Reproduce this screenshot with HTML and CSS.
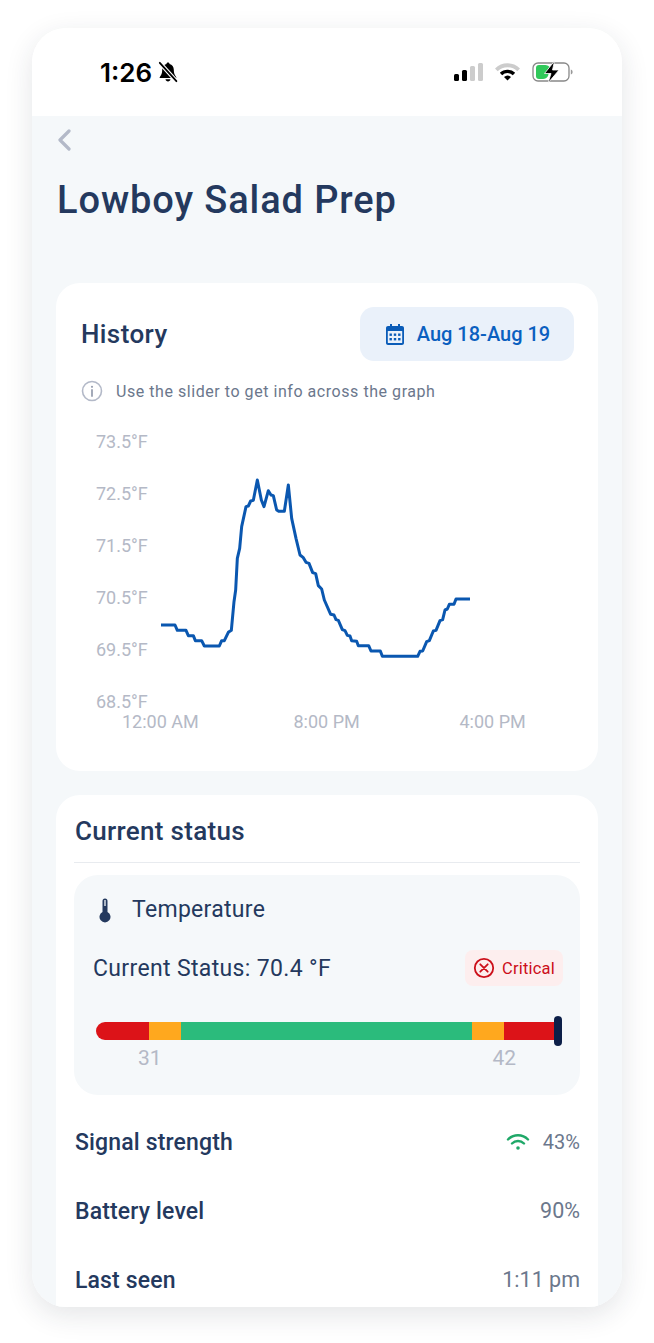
FILE: index.html
```html
<!DOCTYPE html>
<html lang="en">
<head>
  <meta charset="UTF-8">
  <meta name="viewport" content="width=device-width, initial-scale=1.0">
  <title>Lowboy Salad Prep</title>
  <link rel="stylesheet" href="styles.css">
</head>
<body>
  <div class="phone">
    <div class="status-bar">
      <div class="status-left">
        <span class="clock">1:26</span>
        <svg class="bell" width="22" height="22" viewBox="0 0 22 22">
          <path d="M11 1.500c-.9 0-1.500.6-1.500 1.400C6.800 3.600 5.200 5.900 5.200 8.800c0 3.600-.9 5.600-2.400 7.100-.4.500-.1 1.100.5 1.100h15.400c.6 0 .9-.6.5-1.100-1.500-1.500-2.400-3.500-2.400-7.100 0-2.900-1.600-5.200-4.300-5.900C12.500 2.100 11.900 1.500 11 1.500z" fill="#000"/>
          <path d="M8.500 18.300h5c-.2 1.300-1.200 2.200-2.500 2.200s-2.300-.9-2.500-2.200z" fill="#000"/>
          <path d="M2.800 1.800l16.600 18.400" stroke="#fff" stroke-width="4"/>
          <path d="M2.800 1.800l16.600 18.400" stroke="#000" stroke-width="1.800" stroke-linecap="round"/>
        </svg>
      </div>
      <div class="status-right">
        <svg width="30" height="20" viewBox="0 0 30 20">
          <rect x="0" y="12" width="5" height="7" rx="1.500" fill="#000"/>
          <rect x="8" y="8" width="5" height="11" rx="1.500" fill="#000"/>
          <rect x="16" y="4" width="5" height="15" rx="1.500" fill="#ccc"/>
          <rect x="24" y="1" width="5" height="18" rx="1.500" fill="#ccc"/>
        </svg>
        <svg width="25" height="20" viewBox="0 0 25 20">
          <path d="M0 6.500a17.500 17.500 0 0 1 25 0l-2.700 2.800a13.800 13.800 0 0 0-19.600 0z" fill="#ccc"/>
          <path d="M4.800 10.800a11 11 0 0 1 15.400 0l-2.400 2.500a7.500 7.500 0 0 0-10.600 0z" fill="#000"/>
          <path d="M9 15a5.200 5.200 0 0 1 7 0l-3.500 3.600z" fill="#000"/>
        </svg>
        <svg width="42" height="24" viewBox="0 0 42 24">
          <rect x="1" y="3" width="36" height="18" rx="5" fill="none" stroke="#888" stroke-width="1.300"/>
          <path d="M38.800 9.500c1.400.4 1.800 1.400 1.800 2.500s-.4 2.100-1.800 2.500z" fill="#999"/>
          <path d="M7 5h5c4 0 5 1 6 3l-2 8c-1 2-3 3-5 3H7c-2 0-3-1-3-3V8c0-2 1-3 3-3z" fill="#30c85a"/>
          <path d="M22.500 1L12.500 13.500h6.500L16 23l11-13h-6.500z" fill="#000" stroke="#fff" stroke-width=".8"/>
        </svg>
      </div>
    </div>

    <div class="screen">
      <svg class="back" width="16" height="22" viewBox="0 0 16 22">
        <path d="M13 2L4 11l9 9" fill="none" stroke="#b3b9c8" stroke-width="3.200" stroke-linecap="round" stroke-linejoin="round"/>
      </svg>
      <h1 class="title">Lowboy Salad Prep</h1>

      <section class="card history">
        <div class="history-head">
          <h2 class="history-title">History</h2>
          <div class="date-btn">
            <svg width="20" height="21" viewBox="0 0 20 21">
              <path d="M3 2h2V0h2v2h6V0h2v2h2c1.100 0 2 .9 2 2v15c0 1.100-.9 2-2 2H3c-1.100 0-2-.9-2-2V4c0-1.100.9-2 2-2z" fill="#0a5cb8"/>
              <rect x="2.800" y="7" width="14.400" height="12" fill="#eaf1fa" rx=".5"/>
              <g fill="#0a5cb8">
                <rect x="4.500" y="9.500" width="2.400" height="2.400"/><rect x="8.800" y="9.500" width="2.400" height="2.400"/><rect x="13.100" y="9.500" width="2.400" height="2.400"/>
                <rect x="4.500" y="14" width="2.400" height="2.400"/><rect x="8.800" y="14" width="2.400" height="2.400"/><rect x="13.100" y="14" width="2.400" height="2.400"/>
              </g>
            </svg>
            <span>Aug 18-Aug 19</span>
          </div>
        </div>
        <div class="hint">
          <svg width="22" height="22" viewBox="0 0 22 22">
            <circle cx="11" cy="11" r="9.500" fill="none" stroke="#b3b9c8" stroke-width="1.600"/>
            <path d="M11 10v6" stroke="#9aa1b2" stroke-width="1.800" stroke-linecap="round"/>
            <circle cx="11" cy="6.800" r="1.100" fill="#9aa1b2"/>
          </svg>
          <span>Use the slider to get info across the graph</span>
        </div>
        <svg class="chart" width="470" height="310" viewBox="0 0 470 310">
          <g class="axis">
            <text x="6" y="23">73.5°F</text>
            <text x="6" y="75">72.5°F</text>
            <text x="6" y="127">71.5°F</text>
            <text x="6" y="179">70.5°F</text>
            <text x="6" y="231">69.5°F</text>
            <text x="6" y="283">68.5°F</text>
            <text x="32" y="302.500">12:00 AM</text>
            <text x="203.500" y="302.500">8:00 PM</text>
            <text x="369.500" y="302.500">4:00 PM</text>
          </g>
          <polyline transform="scale(.33333)" fill="none" stroke="#0a57b0" stroke-width="9" stroke-linejoin="round" points="213,600 255,600 262,616 288,616 295,632 310,632 316,647 335,647 343,663 388,663 395,647 403,647 415,622 424,616 432,530 437,495 442,400 449,370 455,305 468,245 475,243 482,228 490,226 502,165 514,225 522,245 535,197 543,210 550,212 560,255 567,259 583,259 595,180 605,280 618,340 630,390 640,398 648,412 657,415 668,443 677,446 685,482 695,492 703,525 722,568 732,570 738,584 745,586 757,614 765,617 772,631 780,633 785,647 800,649 805,662 836,662 843,678 871,678 877,694 983,694 990,679 998,678 1010,650 1018,647 1030,618 1038,616 1050,587 1058,584 1065,555 1072,552 1078,538 1092,538 1098,522 1140,522"/>
        </svg>
      </section>

      <section class="card status">
        <h2 class="status-title">Current status</h2>
        <div class="temp-panel">
          <div class="temp-head">
            <svg width="16" height="26" viewBox="0 0 16 26">
              <path d="M5.500 4a2.500 2.500 0 0 1 5 0v11a5.500 5.500 0 1 1-5 0z" fill="#24395e"/>
              <path d="M8 3v6" stroke="#f5f8fa" stroke-width="1.300"/>
            </svg>
            <span>Temperature</span>
          </div>
          <div class="temp-row">
            <span class="temp-now">Current Status: 70.4 °F</span>
            <div class="badge">
              <svg width="22" height="22" viewBox="0 0 22 22">
                <circle cx="11" cy="11" r="9.200" fill="none" stroke="#cc0f1a" stroke-width="1.800"/>
                <path d="M7.300 7.300l7.400 7.400M14.700 7.300l-7.400 7.400" stroke="#cc0f1a" stroke-width="1.800" stroke-linecap="round"/>
              </svg>
              <span>Critical</span>
            </div>
          </div>
          <div class="gauge">
            <div class="seg red first"></div>
            <div class="seg orange small"></div>
            <div class="seg green"></div>
            <div class="seg orange small"></div>
            <div class="seg red last"></div>
            <div class="knob"></div>
          </div>
          <div class="gauge-labels">
            <span>31</span>
            <span>42</span>
          </div>
        </div>
        <div class="row">
          <span class="row-name">Signal strength</span>
          <span class="row-value signal">
            <svg width="24" height="18" viewBox="0 0 24 18">
              <path d="M2 6.500a14 14 0 0 1 20 0M6 10.500a8.500 8.500 0 0 1 12 0" fill="none" stroke="#1fa868" stroke-width="2.400" stroke-linecap="round"/>
              <circle cx="12" cy="15" r="1.800" fill="#1fa868"/>
            </svg>
            43%
          </span>
        </div>
        <div class="row">
          <span class="row-name">Battery level</span>
          <span class="row-value">90%</span>
        </div>
        <div class="row">
          <span class="row-name">Last seen</span>
          <span class="row-value">1:11 pm</span>
        </div>
      </section>
    </div>
  </div>
</body>
</html>
```

FILE: styles.css
```css
html,
body {
  margin: 0;
  background: #fff;
}

body {
  height: 1343px;
  padding: 28px 32px 0;
  box-sizing: border-box;
  font-family: Roboto, "Liberation Sans", sans-serif;
  overflow: hidden;
}

.phone {
  width: 590px;
  height: 1279px;
  border-radius: 34px;
  overflow: hidden;
  background: #fff;
  box-shadow: 0 8px 28px rgba(30, 40, 60, 0.12);
}

.status-bar {
  height: 88px;
  padding: 0 48px 0 68px;
  display: flex;
  justify-content: space-between;
  align-items: center;
  box-sizing: border-box;
  background: #fff;
}

.status-left {
  display: flex;
  align-items: center;
  gap: 5px;
}

.clock {
  font-family: Inter, sans-serif;
  font-size: 26px;
  font-weight: 600;
  color: #000;
}

.status-right {
  display: flex;
  align-items: center;
  gap: 11px;
}

.status-right svg {
  display: block;
}

.status-right svg:last-child {
  margin-left: 1px;
}

.screen {
  height: 1191px;
  background: #f5f8fa;
  padding: 13px 24px 0;
  box-sizing: border-box;
  overflow: hidden;
}

.back {
  display: block;
}

.title {
  margin: 27px 0 0 1px;
  font-size: 38px;
  line-height: 44px;
  font-weight: 500;
  letter-spacing: 0.9px;
  color: #24395e;
}

.card {
  background: #fff;
  border-radius: 24px;
}

.history {
  margin-top: 61px;
  height: 488px;
  padding: 24px 24px 0 25px;
  box-sizing: border-box;
}

.history-head {
  display: flex;
  justify-content: space-between;
  align-items: center;
}

.history-title {
  margin: 0;
  font-size: 26px;
  font-weight: 500;
  letter-spacing: 0.4px;
  color: #24395e;
}

.date-btn {
  width: 214px;
  height: 54px;
  padding-left: 1px;
  box-sizing: border-box;
  border-radius: 14px;
  background: #eaf1fa;
  display: flex;
  align-items: center;
  justify-content: center;
  gap: 12px;
  color: #0a60c0;
  font-size: 20px;
  font-weight: 500;
}

.hint {
  margin-top: 19px;
  display: flex;
  align-items: center;
  gap: 13px;
  font-size: 16px;
  letter-spacing: 0.55px;
  color: #6b778c;
}

.chart {
  display: block;
  margin: 23px 0 0 9px;
}

.axis text {
  font-family: Roboto, sans-serif;
  font-size: 18px;
  fill: #b4b9c6;
}

.status {
  margin-top: 24px;
  height: 600px;
  padding: 20px 18px 0;
  box-sizing: border-box;
}

.status-title {
  margin: 0;
  padding: 0 0 15px 1px;
  border-bottom: 1px solid #e8ebef;
  font-size: 26px;
  line-height: 32px;
  font-weight: 500;
  letter-spacing: 0.3px;
  color: #24395e;
}

.temp-panel {
  margin-top: 12px;
  height: 220px;
  padding: 21px 17px 0 19px;
  box-sizing: border-box;
  background: #f5f8fa;
  border-radius: 24px;
}

.temp-head {
  display: flex;
  align-items: center;
  gap: 19px;
  padding-left: 4px;
  font-size: 23px;
  letter-spacing: 0.3px;
  color: #24395e;
}

.temp-row {
  margin-top: 27px;
  display: flex;
  justify-content: space-between;
  align-items: center;
  font-size: 23px;
  letter-spacing: 0.35px;
  color: #24395e;
}

.badge {
  width: 98px;
  height: 36px;
  border-radius: 8px;
  background: #fdeeee;
  display: flex;
  align-items: center;
  justify-content: center;
  gap: 7px;
  font-size: 16.5px;
  letter-spacing: 0.2px;
  color: #cc0f1a;
}

.gauge {
  position: relative;
  margin: 36px 0 0 3px;
  height: 18px;
  width: 460px;
  display: flex;
}

.seg {
  height: 18px;
}

.red {
  width: 51px;
  background: #dc1318;
}

.red.first {
  width: 53px;
  border-radius: 9px 0 0 9px;
}

.orange {
  width: 32px;
  background: #ffa81e;
}

.green {
  width: 291px;
  background: #2bbb7c;
}

.knob {
  position: absolute;
  right: -6px;
  top: -6px;
  width: 8px;
  height: 30px;
  border-radius: 4px;
  background: #0c1f48;
}

.gauge-labels {
  margin-top: 6px;
  padding: 0 47px 0 45px;
  display: flex;
  justify-content: space-between;
  font-size: 21px;
  color: #b4b9c6;
}

.row {
  height: 69px;
  display: flex;
  justify-content: space-between;
  align-items: center;
}

.temp-panel + .row {
  margin-top: 12px;
}

.row-name {
  padding: 2px 0 0 1px;
  font-size: 23px;
  font-weight: 500;
  letter-spacing: 0.15px;
  color: #24395e;
}

.row-value {
  display: flex;
  align-items: center;
  gap: 13px;
  font-size: 21.5px;
  color: #6b778c;
}

.row-value.signal {
  font-size: 20px;
}
```
